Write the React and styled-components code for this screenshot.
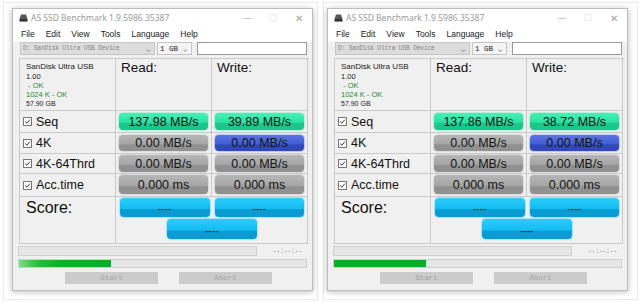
import React from 'react';
import styled, { createGlobalStyle } from 'styled-components';

const GlobalStyle = createGlobalStyle`
	html, body {
		margin: 0;
		padding: 0;
		background: #fff;
	}
	body {
		width: 641px;
		height: 303px;
		overflow: hidden;
		font-family: "Liberation Sans", Arial, sans-serif;
	}
`;

const Page = styled.div`
	display: flex;
	gap: 5px;
	padding: 2px 3px 0 3px;
`;

const Card = styled.div`
	width: 315px;
	height: 298px;
	box-sizing: border-box;
	border: 1px solid #ebebeb;
	box-shadow: 0 0 2px rgba(0, 0, 0, 0.05);
	padding: 5px 0 0 ${p => p.$inset}px;
`;

const Window = styled.div`
	width: 301px;
	height: 283px;
	box-sizing: border-box;
	background: #f0f0f0;
	border: 1px solid #bdbdbd;
	box-shadow: 0 1px 6px rgba(0, 0, 0, 0.28);
	display: flex;
	flex-direction: column;
`;

const TitleBar = styled.div`
	height: 17px;
	background: #fff;
	display: flex;
	align-items: center;
	padding-left: 6px;
	font-family: "Noto Sans", sans-serif;
	font-size: 8.5px;
	color: #9a9a9a;
`;

const TitleText = styled.span`
	margin-left: 3px;
	flex: 1;
`;

const WinControl = styled.span`
	width: 26px;
	text-align: center;
	color: ${p => (p.$faint ? '#dcdcdc' : '#a0a0a0')};
	font-size: ${p => p.$size || 9}px;
`;

const MenuBar = styled.div`
	height: 16px;
	background: #fff;
	display: flex;
	align-items: center;
	gap: 11px;
	padding-left: 8px;
	font-family: "Liberation Sans", Arial, sans-serif;
	font-size: 8.5px;
	color: #222;
`;

const ComboRow = styled.div`
	display: flex;
	align-items: stretch;
	height: 13px;
	margin: 0 5px 3px 7px;
	gap: 2px;
`;

const Combo = styled.div`
	width: ${p => p.$w}px;
	box-sizing: border-box;
	border: 1px solid #c6c6c6;
	background: ${p => (p.$disabled ? '#dcdcdc' : '#f4f4f4')};
	display: flex;
	align-items: center;
	padding: 0 4px 0 2px;
	font-family: "Liberation Mono", "DejaVu Sans Mono", monospace;
	font-size: ${p => (p.$disabled ? 6.3 : 7.5)}px;
	letter-spacing: ${p => (p.$disabled ? '-0.2px' : '0')};
	color: ${p => (p.$disabled ? '#888' : '#222')};
`;

const ComboLabel = styled.span`
	flex: 1;
	white-space: nowrap;
	overflow: hidden;
`;

const Chevron = styled.span`
	font-size: 7px;
	color: #888;
	transform: scaleX(1.4);
`;

const TextBox = styled.div`
	flex: 1;
	margin-left: 3px;
	background: #fff;
	border: 1px solid #9a9a9a;
`;

const Grid = styled.div`
	margin-left: 6px;
	width: 289px;
	display: grid;
	grid-template-columns: 96px 96px 96px;
	grid-template-rows: 52px 22px 21px 20px 23px 47px;
	border-top: 1px solid #c9c9c9;
	border-left: 1px solid #c9c9c9;
`;

const Cell = styled.div`
	border-right: 1px solid #c9c9c9;
	border-bottom: 1px solid #c9c9c9;
	box-sizing: border-box;
	display: flex;
	padding: ${p => p.$pad || '0'};
	min-width: 0;
	grid-column: ${p => p.$span || 'auto'};
`;

const DriveInfo = styled.div`
	padding: 2px 0 0 6px;
	color: #1a1a1a;
`;

const InfoLine = styled.div`
	color: ${p => (p.$ok ? '#2a8a2a' : '#1a1a1a')};
	font-size: ${p => p.$size || 7.5}px;
	line-height: ${p => p.$lh || 9}px;
	white-space: pre;
`;

const HeadLabel = styled.div`
	font-size: 13.5px;
	color: #111;
	padding: 1px 0 0 5px;
`;

const RowLabel = styled.div`
	display: flex;
	align-items: center;
	gap: 3px;
	padding-left: 3px;
	font-size: 12.5px;
	color: #111;
`;

const Check = styled.span`
	width: 7px;
	height: 7px;
	border: 1px solid #777;
	background: #fff;
	display: inline-flex;
	align-items: center;
	justify-content: center;
	margin-right: 1px;
`;

const palette = {
	green: ['#48f0b8', '#2ae0a0', '#1cc58b'],
	gray: ['#b6b6b6', '#a6a6a6', '#909090'],
	blue: ['#5b75e2', '#415ed4', '#3149b8'],
	cyan: ['#2ccdfb', '#13bcf1', '#0a9bd2'],
};

const ValueButton = styled.div`
	flex: 1;
	border-radius: 4px;
	display: flex;
	align-items: center;
	justify-content: center;
	font-size: 12.5px;
	color: #141414;
	background: ${p => {
		const c = palette[p.$tone];
		return `linear-gradient(${c[0]} 0%, ${c[1]} 55%, ${c[2]} 62%, ${c[2]} 100%)`;
	}};
	box-shadow: 0 0 2px ${p => palette[p.$tone][1]};
`;

const ScoreLabel = styled.div`
	font-size: 16px;
	color: #111;
	padding: 2px 0 0 6px;
`;

const ScoreArea = styled.div`
	flex: 1;
	display: grid;
	grid-template-columns: 1fr 1fr;
	grid-template-rows: 19px 20px;
	column-gap: 5px;
	row-gap: 2px;
	padding: 1px 3px 0 4px;
`;

const ScoreButton = styled(ValueButton)`
	font-size: 9px;
	font-weight: bold;
	letter-spacing: 0.4px;
	color: #1e3340;
	padding-top: 3px;
	grid-column: ${p => (p.$center ? '1 / span 2' : 'auto')};
	justify-self: ${p => (p.$center ? 'center' : 'stretch')};
	width: ${p => (p.$center ? '90px' : 'auto')};
`;

const ProgressRow = styled.div`
	display: flex;
	align-items: center;
	margin: ${p => p.$margin};
	padding-left: 5px;
`;

const Bar = styled.div`
	width: ${p => p.$w}px;
	height: ${p => p.$h}px;
	box-sizing: border-box;
	background: #e6e6e6;
	border: 1px solid #cfcfcf;
	overflow: hidden;
`;

const Fill = styled.div`
	height: 100%;
	background: ${p =>
		p.$glow
			? 'linear-gradient(90deg, #7fdc7f 0%, #2dbb3d 20%, #0bb02a 45%, #07ad28 100%)'
			: '#08ad2a'};
`;

const TimeText = styled.span`
	margin-left: 16px;
	font-family: "Liberation Mono", monospace;
	font-size: 6.5px;
	color: #888;
	letter-spacing: -0.3px;
`;

const ActionRow = styled.div`
	display: flex;
	gap: 21px;
	padding-left: 52px;
	margin-top: 4px;
`;

const ActionButton = styled.div`
	width: 93px;
	height: 12px;
	background: #cbcbcb;
	display: flex;
	align-items: center;
	justify-content: center;
	font-family: "Liberation Mono", monospace;
	font-size: 7.5px;
	color: #a4a4a4;
`;

const DriveIcon = () => (
	<svg width="9" height="8" viewBox="0 0 9 8">
		<path d="M2 0.5 H7 L8.5 5 H0.5 Z" fill="#555" />
		<rect x="0.5" y="5" width="8" height="2.6" fill="#333" />
	</svg>
);

const CheckMark = () => (
	<svg width="7" height="7" viewBox="0 0 7 7">
		<path d="M1.2 3.6 L2.9 5.2 L5.9 1.6" fill="none" stroke="#333" strokeWidth="1" />
	</svg>
);

const rows = [
	{ name: 'Seq', key: 'seq' },
	{ name: '4K', key: 'k4' },
	{ name: '4K-64Thrd', key: 'k64' },
	{ name: 'Acc.time', key: 'acc' },
];

const runs = [
	{
		inset: 8,
		glow: true,
		values: {
			seq: [['137.98 MB/s', 'green'], ['39.89 MB/s', 'green']],
			k4: [['0.00 MB/s', 'gray'], ['0.00 MB/s', 'blue']],
			k64: [['0.00 MB/s', 'gray'], ['0.00 MB/s', 'gray']],
			acc: [['0.000 ms', 'gray'], ['0.000 ms', 'gray']],
		},
	},
	{
		inset: 3,
		glow: false,
		values: {
			seq: [['137.86 MB/s', 'green'], ['38.72 MB/s', 'green']],
			k4: [['0.00 MB/s', 'gray'], ['0.00 MB/s', 'blue']],
			k64: [['0.00 MB/s', 'gray'], ['0.00 MB/s', 'gray']],
			acc: [['0.000 ms', 'gray'], ['0.000 ms', 'gray']],
		},
	},
];

const rowPad = {
	seq: '2px 3px 2px 3px',
	k4: '2px 3px 2px 3px',
	k64: '1px 3px 1px 3px',
	acc: '1px 3px 2px 3px',
};

const BenchWindow = ({ run }) => (
	<Window>
		<TitleBar>
			<DriveIcon />
			<TitleText>AS SSD Benchmark 1.9.5986.35387</TitleText>
			<WinControl>—</WinControl>
			<WinControl $faint>☐</WinControl>
			<WinControl $size={10}>✕</WinControl>
		</TitleBar>
		<MenuBar>
			<span>File</span>
			<span>Edit</span>
			<span>View</span>
			<span>Tools</span>
			<span>Language</span>
			<span>Help</span>
		</MenuBar>
		<ComboRow>
			<Combo $w={135} $disabled>
				<ComboLabel>D: SanDisk Ultra USB Device</ComboLabel>
				<Chevron>⌄</Chevron>
			</Combo>
			<Combo $w={35}>
				<ComboLabel>1 GB</ComboLabel>
				<Chevron>⌄</Chevron>
			</Combo>
			<TextBox />
		</ComboRow>
		<Grid>
			<Cell>
				<DriveInfo>
					<InfoLine $size={8} $lh={11}>SanDisk Ultra USB</InfoLine>
					<InfoLine>1.00</InfoLine>
					<InfoLine $ok> - OK</InfoLine>
					<InfoLine $ok>1024 K - OK</InfoLine>
					<InfoLine $size={7}>57.90 GB</InfoLine>
				</DriveInfo>
			</Cell>
			<Cell>
				<HeadLabel>Read:</HeadLabel>
			</Cell>
			<Cell>
				<HeadLabel>Write:</HeadLabel>
			</Cell>
			{rows.map(r => (
				<React.Fragment key={r.key}>
					<Cell>
						<RowLabel>
							<Check>
								<CheckMark />
							</Check>
							{r.name}
						</RowLabel>
					</Cell>
					{run.values[r.key].map(([v, tone], i) => (
						<Cell key={i} $pad={rowPad[r.key]}>
							<ValueButton $tone={tone}>{v}</ValueButton>
						</Cell>
					))}
				</React.Fragment>
			))}
			<Cell>
				<ScoreLabel>Score:</ScoreLabel>
			</Cell>
			<Cell $span="2 / span 2">
				<ScoreArea>
					<ScoreButton $tone="cyan">----</ScoreButton>
					<ScoreButton $tone="cyan">----</ScoreButton>
					<ScoreButton $tone="cyan" $center>
						----
					</ScoreButton>
				</ScoreArea>
			</Cell>
		</Grid>
		<ProgressRow $margin="2px 0 0 0">
			<Bar $w={239} $h={10} />
			<TimeText>--:--:--</TimeText>
		</ProgressRow>
		<ProgressRow $margin="3px 0 0 0">
			<Bar $w={289} $h={9}>
				<Fill $glow={run.glow} style={{ width: '92px' }} />
			</Bar>
		</ProgressRow>
		<ActionRow>
			<ActionButton>Start</ActionButton>
			<ActionButton>Abort</ActionButton>
		</ActionRow>
	</Window>
);

const App = () => (
	<>
		<GlobalStyle />
		<Page>
			{runs.map((run, i) => (
				<Card key={i} $inset={run.inset}>
					<BenchWindow run={run} />
				</Card>
			))}
		</Page>
	</>
);

export default App;
